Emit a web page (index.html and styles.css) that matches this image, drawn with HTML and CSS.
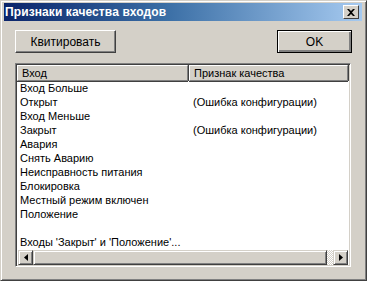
FILE: index.html
```html
<!DOCTYPE html>
<html lang="ru">
<head>
    <meta charset="UTF-8">
    <title>Признаки качества входов</title>
    <link rel="stylesheet" href="styles.css">
</head>
<body>
    <div class="window">
        <div class="titlebar">
            <span class="title">Признаки качества входов</span>
            <span class="close-btn">
                <svg width="8" height="7" viewBox="0 0 8 7"><path d="M0 0h2l2 2 2-2h2L5 3.5 8 7H6L4 5 2 7H0l3-3.5z" fill="#000"/></svg>
            </span>
        </div>

        <div class="toolbar">
            <button class="btn btn-ack">Квитировать</button>
            <button class="btn btn-ok">OK</button>
        </div>

        <div class="list">
            <div class="list-header">
                <div class="col col-name">Вход</div>
                <div class="col col-quality">Признак качества</div>
            </div>
            <div class="list-body">
                <div class="row"><span class="cell-name">Вход Больше</span><span class="cell-quality"></span></div>
                <div class="row"><span class="cell-name">Открыт</span><span class="cell-quality">(Ошибка конфигурации)</span></div>
                <div class="row"><span class="cell-name">Вход Меньше</span><span class="cell-quality"></span></div>
                <div class="row"><span class="cell-name">Закрыт</span><span class="cell-quality">(Ошибка конфигурации)</span></div>
                <div class="row"><span class="cell-name">Авария</span><span class="cell-quality"></span></div>
                <div class="row"><span class="cell-name">Снять Аварию</span><span class="cell-quality"></span></div>
                <div class="row"><span class="cell-name">Неисправность питания</span><span class="cell-quality"></span></div>
                <div class="row"><span class="cell-name">Блокировка</span><span class="cell-quality"></span></div>
                <div class="row"><span class="cell-name">Местный режим включен</span><span class="cell-quality"></span></div>
                <div class="row"><span class="cell-name">Положение</span><span class="cell-quality"></span></div>
                <div class="row"><span class="cell-name"></span><span class="cell-quality"></span></div>
                <div class="row"><span class="cell-name wide">Входы 'Закрыт' и 'Положение'...</span></div>
            </div>
            <div class="hscroll">
                <span class="arrow-btn">
                    <svg width="4" height="7" viewBox="0 0 4 7"><path d="M4 0v7L0 3.5z" fill="#000"/></svg>
                </span>
                <span class="thumb"></span>
                <span class="track"></span>
                <span class="arrow-btn">
                    <svg width="4" height="7" viewBox="0 0 4 7"><path d="M0 0v7l4-3.5z" fill="#000"/></svg>
                </span>
            </div>
        </div>
    </div>
</body>
</html>
```

FILE: styles.css
```css
body {
    margin: 0;
    font-family: 'Liberation Sans', Arial, sans-serif;
    font-size: 11px;
    color: #000;
    background: #d4d0c8;
}
.window {
    width: 367px;
    height: 281px;
    box-sizing: border-box;
    background-color: #d4d0c8;
    border-left: 1px solid #d4d0c8;
    border-top: 1px solid #d4d0c8;
    border-right: 1px solid #404040;
    border-bottom: 1px solid #404040;
    box-shadow: inset 1px 1px 0 #fff, inset -1px -1px 0 #808080;
    padding: 2px 4px 0 3px;
    display: flex;
    flex-direction: column;
}
.titlebar {
    height: 18px;
    display: flex;
    align-items: center;
    justify-content: space-between;
    background: linear-gradient(to right, #0a246a, #3a6ea5 45%, #a6caf0);
    padding: 0 3px 0 1px;
}
.title {
    color: #fff;
    font-weight: bold;
    font-size: 12px;
    letter-spacing: 0.1px;
}
.close-btn {
    width: 16px;
    height: 14px;
    box-sizing: border-box;
    background-color: #d4d0c8;
    border-top: 1px solid #fff;
    border-left: 1px solid #fff;
    border-right: 1px solid #404040;
    border-bottom: 1px solid #404040;
    display: flex;
    align-items: center;
    justify-content: center;
}
.toolbar {
    display: flex;
    justify-content: space-between;
    padding: 9px 10px 0 11px;
}
.btn {
    height: 23px;
    background-color: #d4d0c8;
    font-family: 'Liberation Sans', Arial, sans-serif;
    font-size: 12px;
    color: #000;
    border-top: 1px solid #fff;
    border-left: 1px solid #fff;
    border-right: 1px solid #404040;
    border-bottom: 1px solid #404040;
    box-shadow: inset -1px -1px 0 #808080;
    padding: 0;
}
.btn-ack {
    width: 101px;
}
.btn-ok {
    width: 75px;
    border: 1px solid #000;
    box-shadow: inset 1px 1px 0 #fff, inset -2px -2px 0 #808080;
}
.list {
    margin: 10px 11px 0 11px;
    height: 204px;
    box-sizing: border-box;
    background-color: #fff;
    border-top: 1px solid #808080;
    border-left: 1px solid #808080;
    border-right: 1px solid #fff;
    border-bottom: 1px solid #fff;
    box-shadow: inset 1px 1px 0 #404040, inset -1px -1px 0 #d4d0c8;
    padding: 1px 2px 1px 1px;
    display: flex;
    flex-direction: column;
}
.list-header {
    display: flex;
    height: 16px;
    flex-shrink: 0;
}
.col {
    box-sizing: border-box;
    background-color: #d4d0c8;
    border-top: 1px solid #fff;
    border-left: 1px solid #fff;
    border-right: 1px solid #808080;
    border-bottom: 1px solid #808080;
    box-shadow: 1px 0 0 #404040, 0 1px 0 #404040;
    padding: 1px 0 0 4px;
    font-size: 11px;
    line-height: 12px;
}
.col-name {
    width: 171px;
}
.col-quality {
    flex: 1;
    margin-left: 1px;
}
.list-body {
    flex: 1;
}
.row {
    display: flex;
    height: 14px;
    line-height: 14px;
    white-space: nowrap;
}
.cell-name {
    width: 172px;
    padding-left: 3px;
    box-sizing: border-box;
}
.cell-name.wide {
    width: auto;
}
.cell-quality {
    padding-left: 4px;
}
.hscroll {
    height: 15px;
    flex-shrink: 0;
    display: flex;
    margin-left: 1px;
}
.arrow-btn,
.thumb {
    width: 15px;
    height: 15px;
    box-sizing: border-box;
    background-color: #d4d0c8;
    border-top: 1px solid #d4d0c8;
    border-left: 1px solid #d4d0c8;
    border-right: 1px solid #404040;
    border-bottom: 1px solid #404040;
    box-shadow: inset 1px 1px 0 #fff, inset -1px -1px 0 #808080;
    display: flex;
    align-items: center;
    justify-content: center;
}
.thumb {
    flex: 1;
}
.track {
    width: 6px;
    background-color: #d4d0c8;
    background-image: repeating-conic-gradient(#fff 0 25%, #d4d0c8 0 50%);
    background-size: 2px 2px;
}
```
